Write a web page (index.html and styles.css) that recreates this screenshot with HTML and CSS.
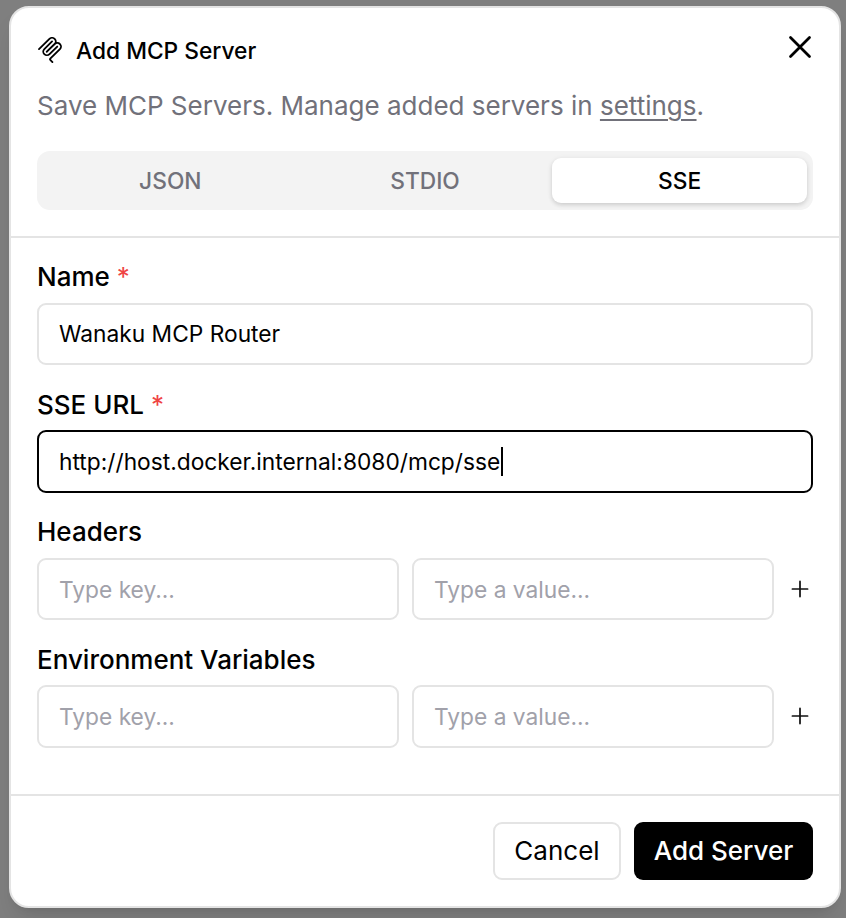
FILE: index.html
```html
<!DOCTYPE html>
<html lang="en">
<head>
<meta charset="utf-8">
<title>Add MCP Server</title>
<link rel="stylesheet" href="styles.css">
</head>
<body>
<main class="dialog">
  <header class="head">
    <div class="title-row">
      <svg class="logo" viewBox="0 0 24 24" fill="currentColor"><path d="M15.688 2.343a2.588 2.588 0 00-3.61 0l-9.626 9.44a.863.863 0 01-1.203 0 .823.823 0 010-1.18l9.626-9.44a4.313 4.313 0 016.016 0 4.116 4.116 0 011.204 3.54 4.3 4.3 0 013.609 1.18l.05.05a4.115 4.115 0 010 5.9l-8.706 8.537a.274.274 0 000 .393l1.788 1.754a.823.823 0 010 1.18.863.863 0 01-1.203 0l-1.788-1.753a1.92 1.92 0 010-2.754l8.706-8.538a2.47 2.47 0 000-3.54l-.05-.049a2.588 2.588 0 00-3.607-.003l-7.172 7.034-.002.002-.098.097a.863.863 0 01-1.204 0 .823.823 0 010-1.18l7.273-7.133a2.47 2.47 0 00-.003-3.537z"/><path d="M14.485 4.703a.823.823 0 000-1.18.863.863 0 00-1.204 0l-7.119 6.982a4.115 4.115 0 000 5.9 4.314 4.314 0 006.016 0l7.12-6.982a.823.823 0 000-1.18.863.863 0 00-1.204 0l-7.119 6.982a2.588 2.588 0 01-3.61 0 2.47 2.47 0 010-3.54l7.12-6.982z"/></svg>
      <h1 class="title">Add MCP Server</h1>
      <svg class="close" viewBox="0 0 24 24"><path d="M18 6 6 18M6 6l12 12"/></svg>
    </div>
    <p class="desc">Save MCP Servers. Manage added servers in <a class="link">settings</a>.</p>
    <nav class="tabs">
      <div class="tab">JSON</div>
      <div class="tab">STDIO</div>
      <div class="tab active">SSE</div>
    </nav>
  </header>
  <section class="form">
    <div class="group">
      <label class="label">Name <span class="req">*</span></label>
      <div class="input raised">Wanaku MCP Router</div>
    </div>
    <div class="group tall">
      <label class="label">SSE URL <span class="req">*</span></label>
      <div class="input focused">http://host.docker.internal:8080/mcp/sse<span class="caret"></span></div>
    </div>
    <div class="group">
      <label class="label">Headers</label>
      <div class="pair">
        <div class="input empty">Type key...</div>
        <div class="input empty">Type a value...</div>
        <svg class="plus" viewBox="0 0 24 24"><path d="M5 12h14M12 5v14"/></svg>
      </div>
    </div>
    <div class="group tall">
      <label class="label">Environment Variables</label>
      <div class="pair">
        <div class="input empty">Type key...</div>
        <div class="input empty">Type a value...</div>
        <svg class="plus" viewBox="0 0 24 24"><path d="M5 12h14M12 5v14"/></svg>
      </div>
    </div>
  </section>
  <footer class="foot">
    <div class="btn outline">Cancel</div>
    <div class="btn primary">Add Server</div>
  </footer>
</main>
</body>
</html>
```
FILE: styles.css
```css
* { box-sizing: border-box; }
body {
  margin: 0;
  height: 918px;
  padding: 6px 5px 10px 9px;
  overflow: hidden;
  background: #7f7f7f;
  color: #000;
  font-family: Inter, "Liberation Sans", sans-serif;
  font-size: 26px;
}
.dialog {
  display: flex;
  flex-direction: column;
  height: 902px;
  background: #fff;
  border: 2px solid #e4e4e4;
  border-radius: 20px;
  box-shadow: 0 16px 24px -5px rgba(0, 0, 0, .1), 0 6px 10px -6px rgba(0, 0, 0, .1);
}
.head {
  height: 230px;
  padding: 20px 26px 26px;
  border-bottom: 2px solid #e4e4e4;
}
.title-row { display: flex; align-items: center; height: 44px; }
.logo { width: 26px; height: 26px; margin-right: 13px; }
.title { flex: 1; margin: 0; padding-top: 2px; font-size: 22.75px; font-weight: 500; line-height: 32px; }
.close { width: 38px; height: 38px; margin: -6px -6px 0 0; }
.close path { fill: none; stroke: #000; stroke-width: 1.75; stroke-linecap: round; }
.desc { margin: 14px 0 25px; line-height: 40px; color: #71717a; }
.link { text-decoration: underline; text-underline-offset: 4px; text-decoration-thickness: 2px; }
.tabs {
  display: flex;
  height: 59px;
  padding: 7px 6px;
  background: #f3f3f3;
  border-radius: 13px;
}
.tab {
  flex: 1;
  border-radius: 9px;
  text-align: center;
  font-size: 22.75px;
  font-weight: 500;
  line-height: 46px;
  color: #71717a;
}
.tab.active { background: #fff; color: #000; box-shadow: 0 2px 4px rgba(0, 0, 0, .12), 0 1px 6px rgba(0, 0, 0, .06); }
.form { flex: 1; display: flex; flex-direction: column; padding: 20px 26px 0; }
.group { height: 127px; }
.group.tall { height: 128px; }
.label { display: block; height: 45px; line-height: 38px; font-weight: 500; }
.tall .label { line-height: 40px; }
.req { color: #ef4444; font-weight: 400; }
.input {
  display: flex;
  align-items: center;
  flex: 1;
  height: 62px;
  padding: 0 20px;
  border: 2px solid #e4e4e4;
  border-radius: 9px;
  font-size: 22.75px;
}
.tall .input { height: 63px; }
.input.raised { padding-bottom: 2px; }
.input.focused { border-color: #000; }
.input.empty { color: #a1a1aa; }
.caret { width: 2px; height: 29px; margin-left: 1px; background: #000; }
.pair { display: flex; align-items: center; gap: 13px; }
.plus { width: 26px; height: 26px; }
.tall .plus { margin-bottom: 1px; }
.plus path { fill: none; stroke: #111; stroke-width: 1.6; stroke-linecap: round; }
.foot {
  display: flex;
  justify-content: flex-end;
  gap: 13px;
  height: 112px;
  padding: 26px 26px 0;
  border-top: 2px solid #e4e4e4;
}
.btn {
  height: 58px;
  border-radius: 9px;
  text-align: center;
  line-height: 58px;
}
.btn.outline { width: 128px; border: 2px solid #e4e4e4; line-height: 54px; }
.btn.primary { width: 179px; background: #000; color: #fff; font-weight: 500; }
```
